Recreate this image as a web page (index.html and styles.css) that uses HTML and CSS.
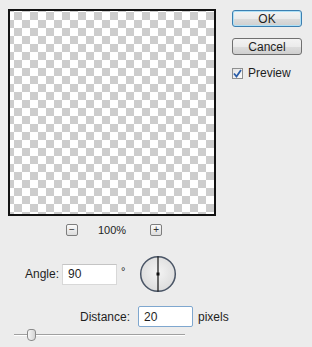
FILE: index.html
```html
<!DOCTYPE html>
<html lang="en">
<head>
    <meta charset="UTF-8">
    <title>Motion Blur</title>
    <link rel="stylesheet" href="styles.css">
</head>
<body>
<div class="dialog">
    <div class="main">
        <!-- Preview area with transparency checkerboard -->
        <div class="preview"></div>
        <div class="zoom-row">
            <span class="zoom-btn">&minus;</span>
            <span class="zoom-value">100%</span>
            <span class="zoom-btn plus">+</span>
        </div>

        <div class="angle-row">
            <label class="field-label" for="angle">Angle:</label>
            <input class="field" id="angle" type="text" value="90">
            <span class="degree">&deg;</span>
            <svg class="dial" width="38" height="38" viewBox="0 0 38 38">
                <defs>
                    <radialGradient id="dialFill" cx="50%" cy="45%" r="55%">
                        <stop offset="0" stop-color="#f4f4f4"/>
                        <stop offset="1" stop-color="#dcdcdc"/>
                    </radialGradient>
                </defs>
                <circle cx="19" cy="19" r="17.3" fill="url(#dialFill)" stroke="#4a5566" stroke-width="1.5"/>
                <line x1="19" y1="1.5" x2="19" y2="36.5" stroke="#111" stroke-width="1.2"/>
                <rect x="17.5" y="17.5" width="3" height="3" fill="#111"/>
            </svg>
        </div>

        <div class="distance-row">
            <label class="field-label" for="distance">Distance:</label>
            <input class="field focused" id="distance" type="text" value="20">
            <span class="unit">pixels</span>
        </div>

        <div class="slider">
            <div class="track"></div>
            <div class="thumb"></div>
        </div>
    </div>

    <div class="side">
        <button class="btn default" type="button">OK</button>
        <button class="btn" type="button">Cancel</button>
        <div class="check-row">
            <span class="checkbox">
                <svg width="9" height="9" viewBox="0 0 9 9"><path d="M1 4.5 L3.5 7.5 L8 1" fill="none" stroke="#2a5da8" stroke-width="1.8"/></svg>
            </span>
            <span class="check-label">Preview</span>
        </div>
    </div>
</div>
</body>
</html>
```

FILE: styles.css
```css
* { box-sizing: border-box; }
body {
    margin: 0;
    background-color: #ececec;
    font-family: "Liberation Sans", Arial, sans-serif;
    font-size: 12px;
    color: #1e1e1e;
}
.dialog {
    display: flex;
    width: 312px;
    height: 347px;
}
.main {
    flex: 0 0 224px;
    min-width: 0;
    padding-top: 9px;
    padding-left: 8px;
}
/* Checkerboard preview */
.preview {
    width: 208px;
    height: 207px;
    border: 2px solid #121212;
    background-color: #fff;
    background-image: conic-gradient(#cdcdcd 25%, #fff 0 50%, #cdcdcd 0 75%, #fff 0);
    background-size: 16px 16px;
    background-position: 12px 1px;
}
.zoom-row {
    display: flex;
    align-items: center;
    margin-top: 8px;
    padding-left: 58px;
    height: 12px;
}
.zoom-btn {
    width: 12px;
    height: 12px;
    border: 1px solid #7d7d7d;
    border-radius: 2px;
    background: linear-gradient(#fafafa, #dcdcdc);
    font-size: 10px;
    line-height: 9px;
    text-align: center;
    color: #333;
}
.zoom-value {
    margin-left: 20px;
    margin-right: 24px;
    font-size: 11px;
}
.angle-row {
    display: flex;
    align-items: center;
    margin-top: 19px;
    height: 38px;
}
.angle-row > *,
.distance-row > * {
    flex-shrink: 0;
}
.field-label {
    text-align: right;
}
.angle-row .field-label {
    width: 51px;
    margin-right: 3px;
}
.field {
    width: 55px;
    height: 21px;
    border: 1px solid #d8d8d8;
    border-top-color: #c4c4c4;
    background: #fff;
    font-family: inherit;
    font-size: 12px;
    color: #1e1e1e;
    padding: 2px 5px;
    outline: none;
}
.field.focused {
    border-color: #7fa7cf;
    border-radius: 2px;
}
.degree {
    margin-left: 4px;
    margin-top: -6px;
    font-size: 11px;
}
.dial {
    margin-left: 14px;
}
.distance-row {
    display: flex;
    align-items: center;
    margin-top: 13px;
}
.distance-row .field-label {
    width: 122px;
    margin-right: 8px;
}
.unit {
    margin-left: 5px;
}
.slider {
    position: relative;
    margin-top: 2px;
    margin-left: 6px;
    width: 171px;
    height: 13px;
}
.track {
    position: absolute;
    left: 0;
    right: 0;
    top: 5px;
    height: 2px;
    border-top: 1px solid #a0a0a0;
    border-bottom: 1px solid #fff;
}
.thumb {
    position: absolute;
    left: 13px;
    top: 0;
    width: 9px;
    height: 12px;
    border: 1px solid #8a8a8a;
    border-radius: 3px 3px 4px 4px;
    background: linear-gradient(90deg, #f6f6f6, #d4d4d4);
}
.side {
    padding-left: 8px;
    padding-top: 10px;
}
.btn {
    display: block;
    width: 70px;
    height: 17px;
    margin-bottom: 11px;
    padding: 0;
    border: 1px solid #707070;
    border-radius: 3px;
    background: linear-gradient(#f3f3f3 0%, #ebebeb 50%, #dddddd 51%, #cfcfcf 100%);
    font-family: inherit;
    font-size: 12px;
    color: #1e1e1e;
}
.btn.default {
    border-color: #3c7fb1;
    box-shadow: inset 0 0 0 1px #aee0f6;
}
.check-row {
    display: flex;
    align-items: center;
    margin-top: 9px;
}
.checkbox {
    display: flex;
    align-items: center;
    justify-content: center;
    width: 11px;
    height: 11px;
    border: 1px solid #8e8f8f;
    background: linear-gradient(135deg, #e4e4e4, #fbfbfb);
}
.check-label {
    margin-left: 5px;
}
```
